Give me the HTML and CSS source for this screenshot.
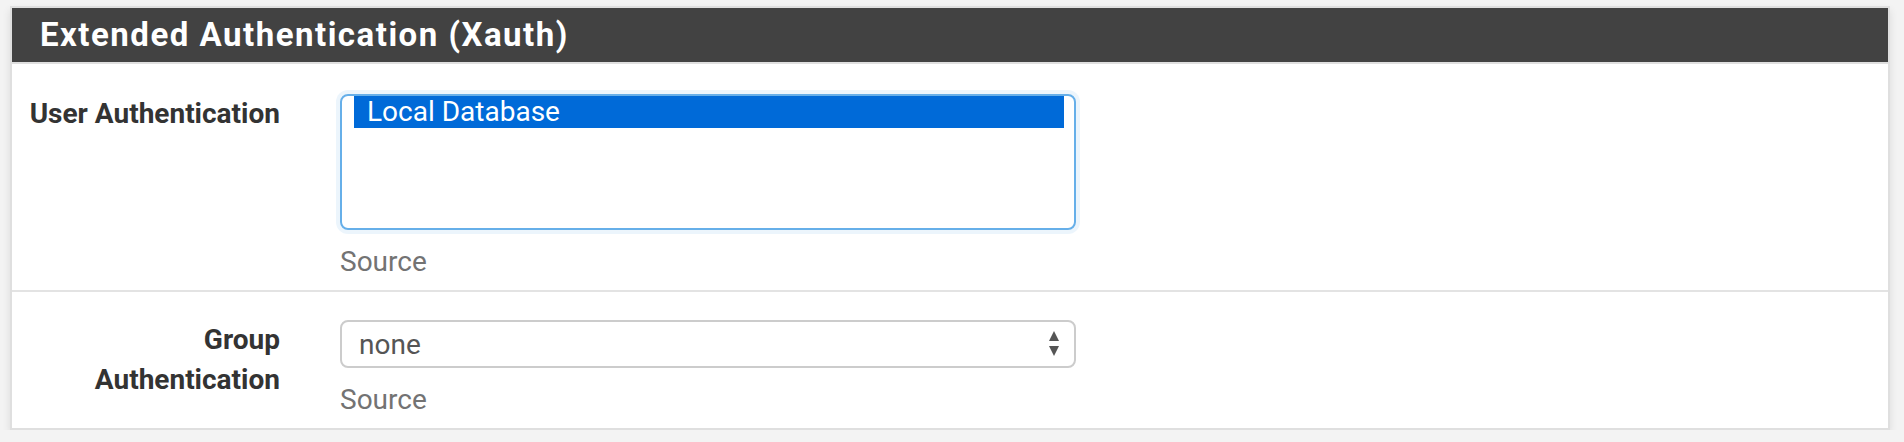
FILE: index.html
```html
<!DOCTYPE html>
<html lang="en">
<head>
    <meta charset="UTF-8">
    <meta name="viewport" content="width=device-width, initial-scale=1.0">
    <title>Extended Authentication (Xauth)</title>
    <link rel="stylesheet" href="styles.css">
</head>
<body>
    <div class="panel">
        <div class="panel-heading">
            <h2 class="panel-title">Extended Authentication (Xauth)</h2>
        </div>

        <div class="form-group first">
            <label class="control-label">User Authentication</label>
            <div class="control">
                <div class="listbox">
                    <div class="option selected">Local Database</div>
                </div>
                <span class="help-block">Source</span>
            </div>
        </div>

        <div class="form-group">
            <label class="control-label">Group<br>Authentication</label>
            <div class="control">
                <div class="select">
                    <span>none</span>
                    <svg class="arrows" width="12" height="28" viewBox="0 0 12 28">
                        <polygon points="6,1 11,11 1,11" fill="#555"/>
                        <polygon points="1,16 11,16 6,26" fill="#555"/>
                    </svg>
                </div>
                <span class="help-block">Source</span>
            </div>
        </div>
    </div>
</body>
</html>
```

FILE: styles.css
```css
body {
    font-family: Roboto, "Liberation Sans", sans-serif;
    margin: 0;
    padding: 6px 14px 0 10px;
    background-color: #f3f3f3;
}

.panel {
    background-color: #fff;
    border: 2px solid #dfdfdf;
    box-shadow: 0 4px 8px rgba(0, 0, 0, 0.1);
}

.panel-heading {
    background-color: #424242;
    border-bottom: 2px solid #dfdfdf;
    padding: 10px 28px;
}

.panel-title {
    margin: 0;
    color: #fff;
    font-size: 33px;
    line-height: 34px;
    font-weight: bold;
    letter-spacing: 1.5px;
}

.form-group {
    display: flex;
    padding: 28px 0 8px 0;
}

.form-group.first {
    padding: 30px 0 8px 0;
    border-bottom: 2px solid #e3e3e3;
}

.control-label {
    flex: 0 0 298px;
    box-sizing: border-box;
    padding-right: 30px;
    text-align: right;
    font-size: 28px;
    line-height: 40px;
    font-weight: bold;
    color: #333;
}

.control {
    margin-left: 30px;
    width: 736px;
}

.listbox {
    height: 136px;
    box-sizing: border-box;
    border: 2px solid #66afe9;
    border-radius: 8px;
    padding: 0 10px 0 12px;
    box-shadow: 0 0 0 4px rgba(102, 175, 233, 0.12);
}

.option {
    height: 32px;
    line-height: 32px;
    padding-left: 13px;
    font-size: 28px;
    color: #555;
}

.option.selected {
    background-color: #006ad8;
    color: #fff;
}

.select {
    display: flex;
    align-items: center;
    justify-content: space-between;
    height: 48px;
    box-sizing: border-box;
    border: 2px solid #ccc;
    border-radius: 8px;
    padding: 0 14px 0 17px;
    font-size: 28px;
    color: #555;
}

.help-block {
    display: block;
    margin-top: 12px;
    font-size: 28px;
    line-height: 40px;
    color: #737373;
}
```
